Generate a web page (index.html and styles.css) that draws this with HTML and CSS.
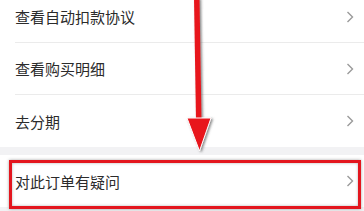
FILE: index.html
```html
<!DOCTYPE html>
<html lang="zh">
<head>
<meta charset="utf-8">
<link rel="stylesheet" href="styles.css">
</head>
<body>
<div class="page">
  <div class="group first">
    <div class="row"><span class="label">查看自动扣款协议</span><svg class="chev" viewBox="0 0 8 12" width="8" height="12"><polyline points="1.5,1 6.5,6 1.5,11"/></svg></div>
    <div class="row"><span class="label">查看购买明细</span><svg class="chev" viewBox="0 0 8 12" width="8" height="12"><polyline points="1.5,1 6.5,6 1.5,11"/></svg></div>
    <div class="row last"><span class="label">去分期</span><svg class="chev" viewBox="0 0 8 12" width="8" height="12"><polyline points="1.5,1 6.5,6 1.5,11"/></svg></div>
  </div>
  <div class="group">
    <div class="row last"><span class="label">对此订单有疑问</span><svg class="chev" viewBox="0 0 8 12" width="8" height="12"><polyline points="1.5,1 6.5,6 1.5,11"/></svg></div>
  </div>
  <div class="highlight"></div>
  <svg class="arrow" viewBox="0 0 364 211" width="364" height="211">
    <defs>
      <filter id="sh" x="-50%" y="-50%" width="200%" height="200%">
        <feDropShadow dx="1.5" dy="1" stdDeviation="1.2" flood-color="#555" flood-opacity="0.7"/>
      </filter>
    </defs>
    <g filter="url(#sh)">
      <polygon points="194,-2 199.5,-2 201.5,121 196,121" fill="#e8141c"/>
      <polygon points="187,118 211,118 199.5,151" fill="#e8141c" stroke="#fff" stroke-width="1" stroke-linejoin="round"/>
    </g>
  </svg>
</div>
</body>
</html>
```

FILE: styles.css
```css
html, body {
  margin: 0;
  padding: 0;
  background: #f2f2f4;
}
.page {
  position: relative;
  width: 364px;
  height: 211px;
  overflow: hidden;
  font-family: "Noto Sans CJK SC", "Noto Sans", sans-serif;
}
.group {
  background: #fff;
  margin-bottom: 8px;
  padding-left: 15px;
}
.group.first {
  margin-top: -9px;
}
.row {
  display: flex;
  align-items: center;
  justify-content: space-between;
  height: 52px;
  padding: 0 10px 0 0;
  box-sizing: border-box;
  border-bottom: 1px solid #ebebeb;
}
.row.last {
  border-bottom: none;
}
.label {
  font-size: 15px;
  color: #2b2b2b;
  line-height: 1;
}
.chev {
  fill: none;
  stroke: #9a9a9a;
  stroke-width: 1.4;
}
.highlight {
  position: absolute;
  left: 9px;
  top: 160px;
  width: 352px;
  height: 49px;
  box-sizing: border-box;
  border: 3px solid #e3161e;
  box-shadow: 0 0 3px rgba(0,0,0,0.35), inset 0 0 3px rgba(0,0,0,0.3);
}
.arrow {
  position: absolute;
  left: 0;
  top: 0;
}
```
